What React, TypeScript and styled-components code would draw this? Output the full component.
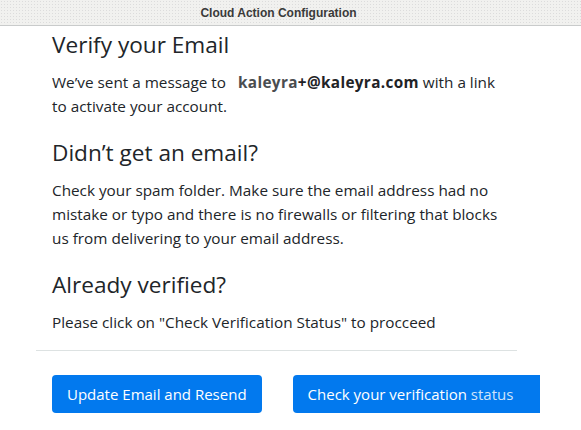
import styled, { createGlobalStyle } from 'styled-components';

const GlobalStyle = createGlobalStyle`
  html, body {
    margin: 0;
    padding: 0;
    background: #ffffff;
  }
  body {
    font-family: "Open Sans", "Noto Sans", sans-serif;
    color: #212529;
    overflow: hidden;
  }
`;

const Window = styled.div`
  width: 581px;
  height: 430px;
  overflow: hidden;
  background: #ffffff;
`;

const TitleBar = styled.div`
  height: 25px;
  display: flex;
  align-items: center;
  justify-content: center;
  padding-right: 24px;
  background-color: #f1f1ef;
  background-image: radial-gradient(#dcdcdc 0.6px, transparent 0.8px);
  background-size: 3px 3px;
  border-bottom: 1px solid #c9cbcb;
  font-family: "Liberation Sans", Arial, sans-serif;
  font-size: 12px;
  font-weight: bold;
  color: #3a3a3a;
`;

const Content = styled.div`
  width: 481px;
  margin-left: 36px;
  padding-top: 5px;
`;

const Section = styled.div`
  padding: 0 16px;
`;

const Heading = styled.h2`
  margin: 0 0 12px;
  font-size: 22.6px;
  font-weight: 400;
  line-height: 1.2;
  color: #212529;
`;

const Text = styled.p<{ $last?: boolean }>`
  margin: 0 0 ${({ $last }) => ($last ? 0 : 21)}px;
  font-size: 15.3px;
  line-height: 24px;
`;

const Email = styled.strong`
  margin-left: 12px;
  font-weight: 700;
  letter-spacing: 0.35px;
  color: #1f2326;
`;

const Masked = styled.span`
  color: #4a4d50;
`;

const Divider = styled.hr`
  margin: 16px 0 24px;
  border: 0;
  border-top: 1px solid #dde2e2;
`;

const Actions = styled.div`
  display: flex;
  gap: 31px;
  margin-left: 52px;
`;

const Button = styled.button<{ $cut?: boolean }>`
  flex: none;
  height: 38px;
  padding: 0 15px;
  border: 0;
  border-radius: ${({ $cut }) => ($cut ? '4px 0 0 4px' : '4px')};
  background: #0279ee;
  color: #ffffff;
  font-family: "Open Sans", "Noto Sans", sans-serif;
  font-size: 15px;
  text-align: left;
  white-space: nowrap;
  overflow: hidden;
  width: ${({ $cut }) => ($cut ? '247px' : 'auto')};
`;

const Faded = styled.span`
  color: #cfe4fb;
`;

export default function App() {
  return (
    <Window>
      <GlobalStyle />
      <TitleBar>Cloud Action Configuration</TitleBar>
      <Content>
        <Section>
          <Heading>Verify your Email</Heading>
          <Text>
            We’ve sent a message to
            <Email>
              <Masked>kaleyra</Masked>+@kaleyra.com
            </Email>{' '}
            with a link to activate your account.
          </Text>
          <Heading>Didn’t get an email?</Heading>
          <Text>
            Check your spam folder. Make sure the email address had no mistake or typo and there is
            no firewalls or filtering that blocks us from delivering to your email address.
          </Text>
          <Heading>Already verified?</Heading>
          <Text $last>Please click on "Check Verification Status" to procceed</Text>
        </Section>
        <Divider />
      </Content>
      <Actions>
        <Button>Update Email and Resend</Button>
        <Button $cut>
          Check your verification <Faded>status</Faded>
        </Button>
      </Actions>
    </Window>
  );
}
